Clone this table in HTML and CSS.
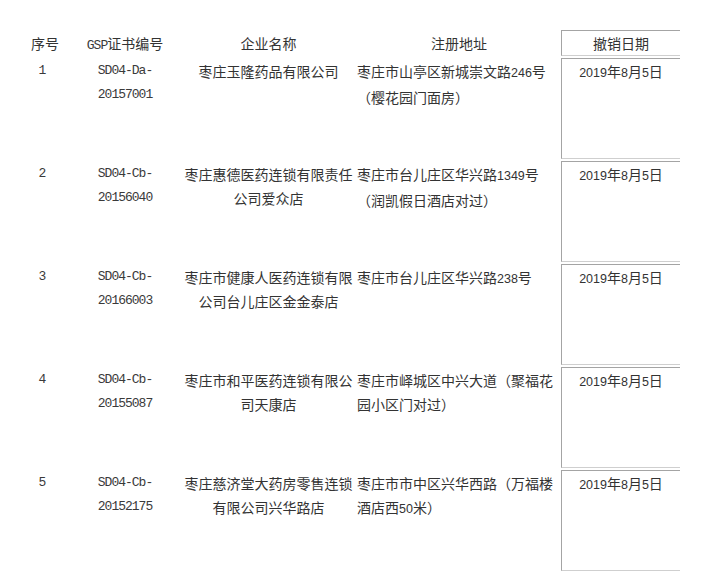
FILE: index.html
```html
<!DOCTYPE html>
<html lang="zh-CN">
<head>
<meta charset="utf-8">
<title>撤销GSP证书企业名单</title>
<link rel="stylesheet" href="styles.css">
</head>
<body>
<div class="table">
  <div class="cell head">序号</div>
  <div class="cell head"><span class="m">GSP</span>证书编号</div>
  <div class="cell head">企业名称</div>
  <div class="cell head">注册地址</div>
  <div class="cell head date">撤销日期</div>

  <div class="cell no m">1</div>
  <div class="cell gsp m">SD04-Da-<br>20157001</div>
  <div class="cell name">枣庄玉隆药品有限公司</div>
  <div class="cell addr">枣庄市山亭区新城崇文路<span class="d">246</span>号<br>（樱花园门面房）</div>
  <div class="cell date"><span class="d">2019</span>年<span class="d">8</span>月<span class="d">5</span>日</div>

  <div class="cell no m">2</div>
  <div class="cell gsp m">SD04-Cb-<br>20156040</div>
  <div class="cell name">枣庄惠德医药连锁有限责任<br>公司爱众店</div>
  <div class="cell addr">枣庄市台儿庄区华兴路<span class="d">1349</span>号<br>（润凯假日酒店对过）</div>
  <div class="cell date"><span class="d">2019</span>年<span class="d">8</span>月<span class="d">5</span>日</div>

  <div class="cell no m">3</div>
  <div class="cell gsp m">SD04-Cb-<br>20166003</div>
  <div class="cell name">枣庄市健康人医药连锁有限<br>公司台儿庄区金金泰店</div>
  <div class="cell addr">枣庄市台儿庄区华兴路<span class="d">238</span>号</div>
  <div class="cell date"><span class="d">2019</span>年<span class="d">8</span>月<span class="d">5</span>日</div>

  <div class="cell no m">4</div>
  <div class="cell gsp m">SD04-Cb-<br>20155087</div>
  <div class="cell name">枣庄市和平医药连锁有限公<br>司天康店</div>
  <div class="cell addr">枣庄市峄城区中兴大道（聚福花<br>园小区门对过）</div>
  <div class="cell date"><span class="d">2019</span>年<span class="d">8</span>月<span class="d">5</span>日</div>

  <div class="cell no m">5</div>
  <div class="cell gsp m">SD04-Cb-<br>20152175</div>
  <div class="cell name">枣庄慈济堂大药房零售连锁<br>有限公司兴华路店</div>
  <div class="cell addr">枣庄市市中区兴华西路（万福楼<br>酒店西<span class="d">50</span>米）</div>
  <div class="cell date"><span class="d">2019</span>年<span class="d">8</span>月<span class="d">5</span>日</div>
</div>
</body>
</html>
```

FILE: styles.css
```css
html, body {
  margin: 0;
  padding: 0;
  background: #ffffff;
}

body {
  font-family: "Noto Sans CJK SC", "Noto Sans CJK TC", sans-serif;
  font-size: 14px;
  color: #333333;
}

.table {
  display: grid;
  grid-template-columns: 50px 110px 177px 204px 119px;
  grid-template-rows: 26px repeat(5, 101px);
  row-gap: 2px;
  padding: 30px 0 0 20px;
}

.cell {
  line-height: 24px;
  border-top: 1px solid transparent;
  white-space: nowrap;
  text-align: center;
  box-sizing: border-box;
}

.head {
  text-align: center;
}

.no {
  padding-right: 6px;
}

.addr {
  text-align: left;
}

.addr.head {
  text-align: center;
  padding-right: 4px;
}

.date {
  border-top: 1px solid #a4a4a4;
  border-left: 1px solid #a4a4a4;
  border-bottom: 1px solid #cfcfcf;
  text-align: center;
}

.m {
  font-family: "Liberation Mono", monospace;
  font-size: 13px;
  letter-spacing: -1px;
  color: #3a3a3a;
}

.d {
  font-family: "Liberation Sans", sans-serif;
  font-size: 12.5px;
}
```
